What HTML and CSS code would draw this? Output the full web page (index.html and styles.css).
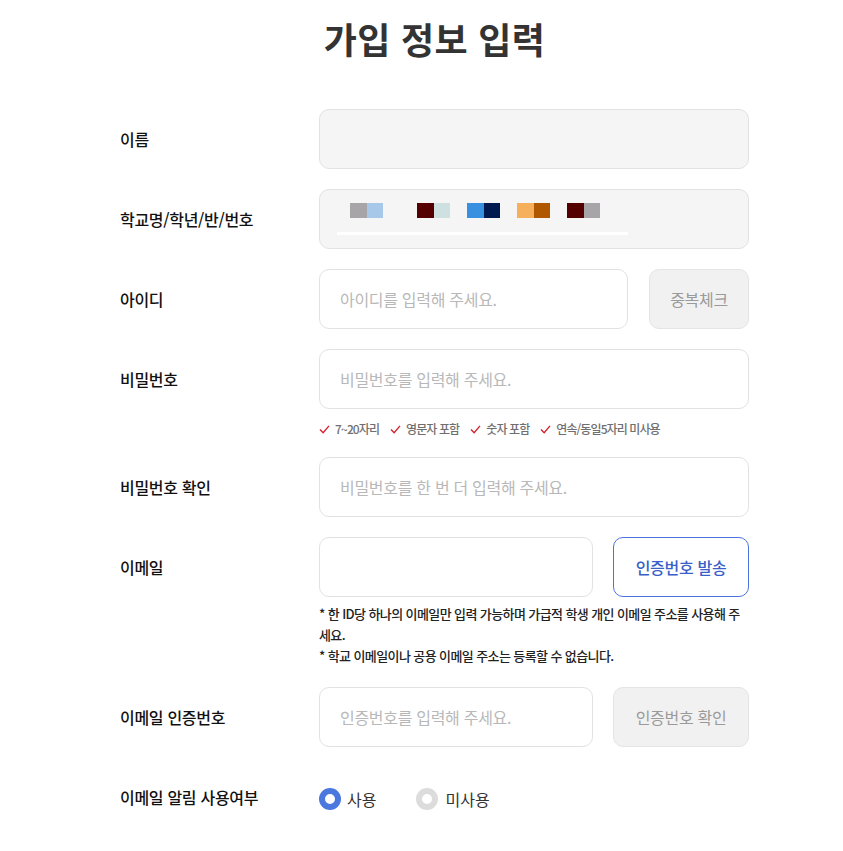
FILE: index.html
```html
<!DOCTYPE html>
<html lang="ko">
<head>
<meta charset="utf-8">
<link rel="stylesheet" href="styles.css">
</head>
<body>
<div class="page">
  <h1 class="title">가입 정보 입력</h1>
  <form class="form">
    <div class="row">
      <div class="label">이름</div>
      <div class="field"><div class="input filled"></div></div>
    </div>
    <div class="row">
      <div class="label">학교명/학년/반/번호</div>
      <div class="field">
        <div class="input filled school">
          <div class="swatches">
            <span class="sw"><i style="background:#a7a5a8"></i><i style="background:#a7c8e8"></i></span>
            <span class="sw"><i style="background:#550000"></i><i style="background:#cfe0e0"></i></span>
            <span class="sw"><i style="background:#3890e0"></i><i style="background:#001a50"></i></span>
            <span class="sw"><i style="background:#f6b05c"></i><i style="background:#b05800"></i></span>
            <span class="sw"><i style="background:#550000"></i><i style="background:#a7a5a8"></i></span>
          </div>
          <div class="bar"></div>
        </div>
      </div>
    </div>
    <div class="row">
      <div class="label">아이디</div>
      <div class="field with-btn">
        <div class="input ph id">아이디를 입력해 주세요.</div>
        <div class="btn gray w100">중복체크</div>
      </div>
    </div>
    <div class="row tight">
      <div class="label">비밀번호</div>
      <div class="field"><div class="input ph">비밀번호를 입력해 주세요.</div></div>
    </div>
    <div class="hints">
      <span class="hint"><svg viewBox="0 0 12 10" width="11" height="9"><polyline points="1,5 4.5,8.5 11,1" fill="none" stroke="#d41f2c" stroke-width="1.5"/></svg>7~20자리</span>
      <span class="hint"><svg viewBox="0 0 12 10" width="11" height="9"><polyline points="1,5 4.5,8.5 11,1" fill="none" stroke="#d41f2c" stroke-width="1.5"/></svg>영문자 포함</span>
      <span class="hint"><svg viewBox="0 0 12 10" width="11" height="9"><polyline points="1,5 4.5,8.5 11,1" fill="none" stroke="#d41f2c" stroke-width="1.5"/></svg>숫자 포함</span>
      <span class="hint"><svg viewBox="0 0 12 10" width="11" height="9"><polyline points="1,5 4.5,8.5 11,1" fill="none" stroke="#d41f2c" stroke-width="1.5"/></svg>연속/동일5자리 미사용</span>
    </div>
    <div class="row">
      <div class="label">비밀번호 확인</div>
      <div class="field"><div class="input ph">비밀번호를 한 번 더 입력해 주세요.</div></div>
    </div>
    <div class="row tight">
      <div class="label">이메일</div>
      <div class="field with-btn">
        <div class="input"></div>
        <div class="btn blue w136">인증번호 발송</div>
      </div>
    </div>
    <div class="notes">
      <p>* 한 ID당 하나의 이메일만 입력 가능하며 가급적 학생 개인 이메일 주소를 사용해 주세요.</p>
      <p>* 학교 이메일이나 공용 이메일 주소는 등록할 수 없습니다.</p>
    </div>
    <div class="row">
      <div class="label">이메일 인증번호</div>
      <div class="field with-btn">
        <div class="input ph">인증번호를 입력해 주세요.</div>
        <div class="btn gray w136">인증번호 확인</div>
      </div>
    </div>
    <div class="row radio-row">
      <div class="label">이메일 알림 사용여부</div>
      <div class="field radios">
        <span class="radio on"><span class="dot"></span>사용</span>
        <span class="radio off"><span class="dot"></span>미사용</span>
      </div>
    </div>
  </form>
</div>
</body>
</html>
```

FILE: styles.css
```css
* { box-sizing: border-box; }
html, body { margin: 0; padding: 0; background: #fff; }
body {
  font-family: "Noto Sans CJK KR", "Noto Sans", sans-serif;
  color: #111;
}
.page { padding-top: 12px; }
.title {
  margin: 0;
  font-size: 36px;
  font-weight: 700;
  line-height: 52px;
  color: #333;
  text-align: center;
  padding-left: 26px;
  letter-spacing: 0.3px;
}
.form {
  margin: 45px 0 0 120px;
  width: 629px;
}
.row {
  display: flex;
  align-items: center;
  height: 60px;
  margin-bottom: 20px;
}
.row.tight { margin-bottom: 0; }
.label {
  width: 199px;
  flex: none;
  font-size: 16px;
  font-weight: 500;
  color: #111;
  letter-spacing: -0.3px;
}
.field {
  flex: 1;
  height: 60px;
  display: flex;
}
.with-btn { gap: 20px; }
.input {
  flex: 1;
  height: 60px;
  border: 1px solid #e2e2e2;
  border-radius: 10px;
  background: #fff;
}
.input.filled { background: #f5f5f5; }
.input.ph {
  display: flex;
  align-items: center;
  padding-left: 20px;
  font-size: 16px;
  color: #b8b8b8;
  letter-spacing: -0.3px;
}
.input.id { margin-right: 1px; }
.school { padding: 13px 0 0 17px; }
.swatches {
  display: flex;
  gap: 17px;
  padding-left: 13px;
}
.sw { display: flex; }
.sw:first-child { margin-right: 17px; }
.sw i { display: block; width: 16.5px; height: 15px; }
.bar {
  margin-top: 14px;
  width: 291px;
  height: 3px;
  background: #fff;
}
.btn {
  flex: none;
  height: 60px;
  border-radius: 10px;
  display: flex;
  align-items: center;
  justify-content: center;
  font-size: 16px;
  letter-spacing: -0.3px;
}
.w100 { width: 100px; }
.w136 { width: 136px; }
.btn.gray {
  background: #f1f1f1;
  border: 1px solid #e4e4e4;
  color: #9a9a9a;
}
.btn.blue {
  background: #fff;
  border: 1px solid #4a74dc;
  color: #3a5fc8;
  font-weight: 500;
}
.hints {
  margin-left: 199px;
  padding-top: 11px;
  height: 48px;
  display: flex;
  align-items: flex-start;
  gap: 11px;
  font-size: 12px;
  line-height: 18px;
  color: #6f6f6f;
  font-weight: 500;
  letter-spacing: -0.9px;
}
.hint { display: flex; align-items: center; gap: 5px; height: 18px; }
.hint svg { flex: none; }
.notes {
  margin-left: 199px;
  padding-top: 6px;
  height: 90px;
  font-size: 13px;
  line-height: 21px;
  color: #222;
  letter-spacing: -0.6px;
  font-weight: 500;
}
.notes p { margin: 0; }
.radios {
  align-items: center;
  gap: 0;
  font-size: 16px;
  color: #333;
}
.radio {
  display: flex;
  align-items: center;
  gap: 6px;
  margin-right: 40px;
  padding-top: 4px;
}
.radio.off { gap: 7px; }
.dot {
  width: 22px;
  height: 22px;
  border-radius: 50%;
  background: #fff;
}
.radio.on .dot { border: 6px solid #4a78df; }
.radio.off .dot { border: 6px solid #dcdcdc; }
```
